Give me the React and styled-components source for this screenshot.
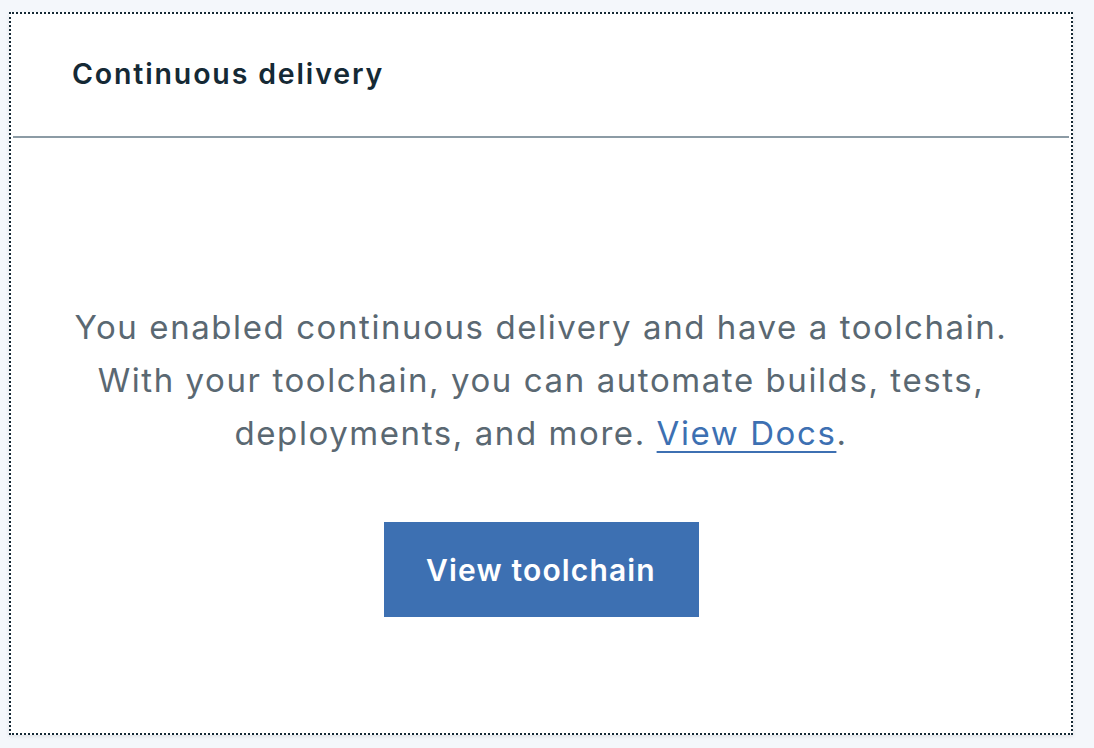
import React from "react";
import styled, { createGlobalStyle } from "styled-components";

const GlobalStyle = createGlobalStyle`
  html, body {
    margin: 0;
    padding: 0;
    background: #f4f7fb;
  }
  body {
    font-family: Inter, "Noto Sans", Arial, sans-serif;
  }
`;

const Page = styled.div`
  box-sizing: border-box;
  width: 1094px;
  height: 748px;
  padding: 12px 21px 13px 9px;
  background: #f4f7fb;
`;

const Card = styled.section`
  box-sizing: border-box;
  height: 100%;
  display: flex;
  flex-direction: column;
  background: #ffffff;
  border: 2px dotted #152935;
  box-shadow: 0 2px 4px rgba(0, 0, 0, 0.08);
`;

const Header = styled.header`
  box-sizing: border-box;
  height: 124px;
  margin: 0 2px;
  padding: 0 0 3px 59px;
  display: flex;
  align-items: center;
  border-bottom: 2px solid #8c9ba5;
`;

const Title = styled.h2`
  margin: 0;
  font-size: 28.5px;
  font-weight: 600;
  letter-spacing: 1.85px;
  color: #152935;
`;

const Body = styled.div`
  flex: 1;
  display: flex;
  flex-direction: column;
  align-items: center;
  padding-top: 163px;
`;

const Message = styled.p`
  margin: 0;
  font-size: 33px;
  line-height: 53px;
  letter-spacing: 1.58px;
  color: #5a6872;
  text-align: center;
`;

const DocLink = styled.a`
  color: #3d70b2;
  text-decoration: underline;
  text-decoration-thickness: 2px;
  text-underline-offset: 6px;
`;

const PrimaryButton = styled.button`
  margin-top: 62px;
  width: 315px;
  height: 95px;
  padding: 0;
  border: none;
  background: #3d70b2;
  color: #ffffff;
  font-family: inherit;
  font-size: 30px;
  font-weight: 600;
  letter-spacing: 1.15px;
  cursor: pointer;
`;

export default function App() {
  return (
    <Page>
      <GlobalStyle />
      <Card>
        <Header>
          <Title>Continuous delivery</Title>
        </Header>
        <Body>
          <Message>
            You enabled continuous delivery and have a toolchain.
            <br />
            With your toolchain, you can automate builds, tests,
            <br />
            deployments, and more. <DocLink href="#">View Docs</DocLink>.
          </Message>
          <PrimaryButton>View toolchain</PrimaryButton>
        </Body>
      </Card>
    </Page>
  );
}
